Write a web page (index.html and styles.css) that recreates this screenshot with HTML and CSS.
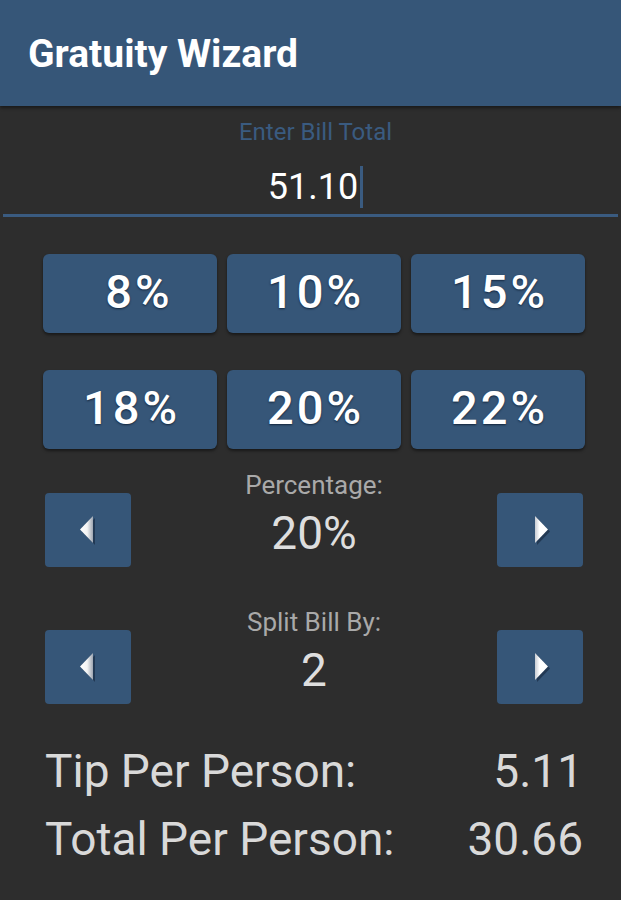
FILE: index.html
```html
<!DOCTYPE html>
<html>
<head>
<meta charset="utf-8">
<link rel="stylesheet" href="styles.css">
</head>
<body>
<header class="appbar"><h1 class="title">Gratuity Wizard</h1></header>
<main class="content">
  <section class="bill">
    <div class="bill-label">Enter Bill Total</div>
    <div class="bill-value"><span>51.10</span><span class="cursor"></span></div>
  </section>
  <section class="presets">
    <button class="preset pad8">8%</button>
    <button class="preset">10%</button>
    <button class="preset">15%</button>
    <button class="preset">18%</button>
    <button class="preset">20%</button>
    <button class="preset">22%</button>
  </section>
  <section class="stepper">
    <button class="arrow"><svg width="22" height="32" viewBox="0 0 22 32"><defs><linearGradient id="gl" x1="0" y1="0" x2="1" y2="0"><stop offset="0" stop-color="#ffffff"/><stop offset="0.55" stop-color="#f4f4f4"/><stop offset="1" stop-color="#9ea6b2"/></linearGradient></defs><polygon points="18,4 18,31 5,17.5" fill="#1f344d" opacity="0.85"/><polygon points="16,2 16,29 3,15.5" fill="url(#gl)"/></svg></button>
    <div class="step-center">
      <div class="step-label">Percentage:</div>
      <div class="step-value">20%</div>
    </div>
    <button class="arrow"><svg width="22" height="32" viewBox="0 0 22 32"><defs><linearGradient id="gr" x1="0" y1="0" x2="1" y2="0"><stop offset="0" stop-color="#c8ccd3"/><stop offset="0.35" stop-color="#ffffff"/><stop offset="1" stop-color="#ffffff"/></linearGradient></defs><polygon points="8,4 8,31 21,17.5" fill="#1f344d" opacity="0.85"/><polygon points="6,2 6,29 19,15.5" fill="url(#gr)"/></svg></button>
  </section>
  <section class="stepper split">
    <button class="arrow"><svg width="22" height="32" viewBox="0 0 22 32"><polygon points="18,4 18,31 5,17.5" fill="#1f344d" opacity="0.85"/><polygon points="16,2 16,29 3,15.5" fill="url(#gl)"/></svg></button>
    <div class="step-center">
      <div class="step-label">Split Bill By:</div>
      <div class="step-value">2</div>
    </div>
    <button class="arrow"><svg width="22" height="32" viewBox="0 0 22 32"><polygon points="8,4 8,31 21,17.5" fill="#1f344d" opacity="0.85"/><polygon points="6,2 6,29 19,15.5" fill="url(#gr)"/></svg></button>
  </section>
  <section class="results">
    <div class="result-row"><span>Tip Per Person:</span><span>5.11</span></div>
    <div class="result-row"><span>Total Per Person:</span><span>30.66</span></div>
  </section>
</main>
</body>
</html>
```
FILE: styles.css
```css
html, body {
  margin: 0;
  padding: 0;
  background: #2d2d2d;
  font-family: Roboto, "Noto Sans", sans-serif;
}
.appbar {
  height: 106px;
  background: #365678;
  display: flex;
  align-items: center;
  padding-left: 28px;
  box-shadow: 0 2px 3px rgba(0,0,0,0.45);
  position: relative;
}
.title {
  margin: 0;
  color: #ffffff;
  font-size: 39px;
  font-weight: 700;
  padding-top: 2px;
}
.content {
  display: flex;
  flex-direction: column;
}
.bill {
  margin: 0 3px;
  border-bottom: 3px solid #3a5b80;
  display: flex;
  flex-direction: column;
  align-items: center;
  padding: 12px 0 6px 10px;
}
.bill-label {
  color: #3a5b80;
  font-size: 24px;
  line-height: 28px;
}
.bill-value {
  display: flex;
  align-items: center;
  margin-top: 20px;
  color: #ffffff;
  font-size: 36px;
  line-height: 40px;
}
.cursor {
  display: inline-block;
  width: 3px;
  height: 42px;
  background: #3a5b80;
  margin-left: 2px;
}
.presets {
  display: grid;
  grid-template-columns: repeat(3, 174px);
  column-gap: 10px;
  row-gap: 37px;
  padding: 37px 0 0 43px;
}
.preset {
  height: 79px;
  border: none;
  border-radius: 6px;
  background: #365678;
  color: #ffffff;
  font-family: Roboto, sans-serif;
  font-weight: 500;
  font-size: 47px;
  letter-spacing: 3px;
  text-shadow: 0 1px 2px rgba(10,25,45,0.8);
  box-shadow: 0 2px 3px rgba(0,0,0,0.45);
  padding: 0 0 4px 3px;
}
.pad8 { padding-left: 18px; }
.stepper {
  display: flex;
  justify-content: space-between;
  align-items: flex-start;
  padding: 0 38px 0 45px;
  margin-top: 21px;
}
.split { margin-top: 40px; }
.arrow {
  width: 86px;
  height: 74px;
  margin-top: 23px;
  border: none;
  border-radius: 4px;
  background: #365678;
  display: flex;
  align-items: center;
  justify-content: center;
  padding: 0;
}
.step-center {
  display: flex;
  flex-direction: column;
  align-items: center;
}
.step-label {
  color: #a9a9a9;
  font-size: 26px;
  line-height: 30px;
}
.step-value {
  color: #dedede;
  font-size: 46px;
  line-height: 50px;
  margin-top: 8px;
}
.results {
  display: flex;
  flex-direction: column;
  padding: 39px 38px 0 45px;
  gap: 12px;
}
.result-row {
  display: flex;
  justify-content: space-between;
  color: #d9d9d9;
  font-size: 46px;
  line-height: 56px;
}
```
